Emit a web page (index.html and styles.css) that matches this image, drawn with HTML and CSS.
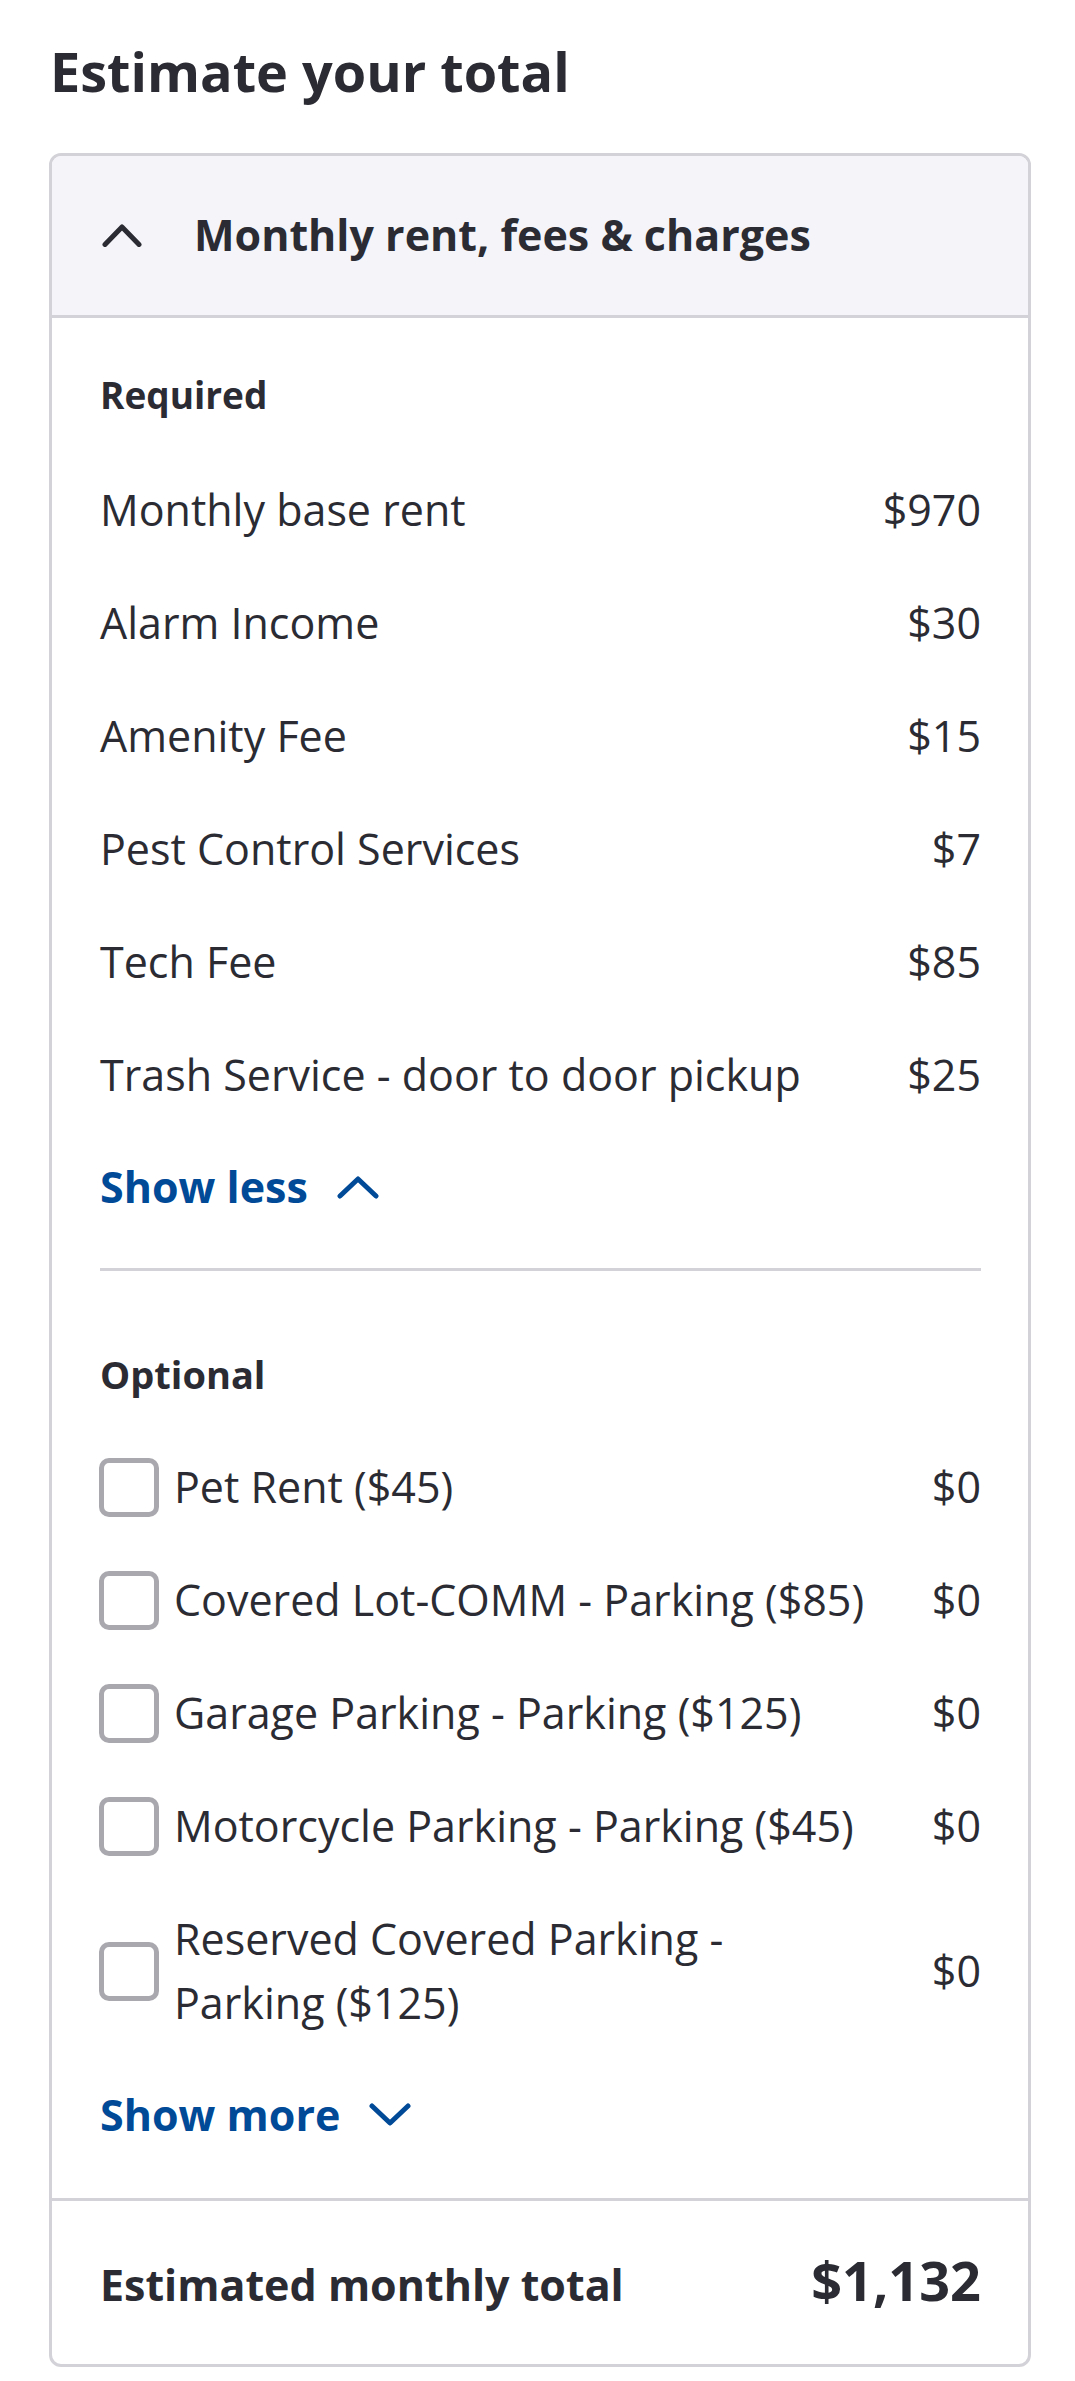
FILE: index.html
```html
<!DOCTYPE html>
<html lang="en">
<head>
<meta charset="utf-8">
<title>Estimate your total</title>
<link rel="stylesheet" href="styles.css">
</head>
<body>
<main class="page">
  <h1 class="title">Estimate your total</h1>
  <section class="card">
    <button class="card-header" type="button">
      <svg class="chev chev-header" viewBox="0 0 40 24" aria-hidden="true"><path d="M3 21.5 L20 4 L37 21.5"/></svg>
      <span class="card-title">Monthly rent, fees &amp; charges</span>
    </button>
    <div class="card-body">
      <h2 class="group-label">Required</h2>
      <ul class="fee-list">
        <li class="fee-row"><span class="fee-name">Monthly base rent</span><span class="amount">$970</span></li>
        <li class="fee-row"><span class="fee-name">Alarm Income</span><span class="amount">$30</span></li>
        <li class="fee-row"><span class="fee-name">Amenity Fee</span><span class="amount">$15</span></li>
        <li class="fee-row"><span class="fee-name">Pest Control Services</span><span class="amount">$7</span></li>
        <li class="fee-row"><span class="fee-name">Tech Fee</span><span class="amount">$85</span></li>
        <li class="fee-row"><span class="fee-name">Trash Service - door to door pickup</span><span class="amount">$25</span></li>
      </ul>
      <button class="toggle toggle-less" type="button">Show less
        <svg class="chev chev-toggle" viewBox="0 0 42 24" aria-hidden="true"><path d="M3 21 L21 4 L39 21"/></svg>
      </button>
      <hr class="divider">
      <h2 class="group-label group-optional">Optional</h2>
      <ul class="fee-list">
        <li class="fee-row"><label class="option"><span class="checkbox"></span><span class="fee-name">Pet Rent ($45)</span></label><span class="amount">$0</span></li>
        <li class="fee-row"><label class="option"><span class="checkbox"></span><span class="fee-name">Covered Lot-COMM - Parking ($85)</span></label><span class="amount">$0</span></li>
        <li class="fee-row"><label class="option"><span class="checkbox"></span><span class="fee-name">Garage Parking - Parking ($125)</span></label><span class="amount">$0</span></li>
        <li class="fee-row"><label class="option"><span class="checkbox"></span><span class="fee-name">Motorcycle Parking - Parking ($45)</span></label><span class="amount">$0</span></li>
        <li class="fee-row"><label class="option"><span class="checkbox"></span><span class="fee-name">Reserved Covered Parking - Parking ($125)</span></label><span class="amount">$0</span></li>
      </ul>
      <button class="toggle toggle-more" type="button">Show more
        <svg class="chev chev-toggle" viewBox="0 0 42 24" aria-hidden="true"><path d="M3 3 L21 20 L39 3"/></svg>
      </button>
    </div>
    <div class="card-footer">
      <span class="footer-label">Estimated monthly total</span>
      <span class="total">$1,132</span>
    </div>
  </section>
</main>
</body>
</html>
```
FILE: styles.css
```css
* {
  box-sizing: border-box;
}

body {
  margin: 0;
  background: #ffffff;
  color: #2b2c33;
  font-family: "Open Sans", "Noto Sans", sans-serif;
}

.page {
  padding: 34px 44px 0 49px;
}

.title {
  margin: 0 0 44px 1px;
  font-size: 54px;
  line-height: 75px;
  font-weight: 700;
}

.card {
  border: 3px solid #d2d2d8;
  border-radius: 12px;
  overflow: hidden;
}

.card-header {
  display: flex;
  align-items: center;
  gap: 52px;
  width: 100%;
  margin: 0;
  padding: 47px 47px 48px 50px;
  background: #f4f4f9;
  border: 0;
  border-bottom: 3px solid #d2d2d8;
  color: #2b2c33;
  font-family: inherit;
  text-align: left;
}

.card-title {
  font-size: 43px;
  line-height: 64px;
  font-weight: 700;
}

.chev {
  flex: none;
  fill: none;
  stroke-width: 5;
  stroke-linecap: round;
  stroke-linejoin: round;
}

.chev-header {
  width: 40px;
  height: 24px;
  stroke: #2b2c33;
}

.chev-toggle {
  width: 42px;
  height: 24px;
  stroke: #004a98;
}

.card-body {
  padding: 52px 47px 51px 48px;
}

.group-label {
  margin: 0 0 34px;
  font-size: 37px;
  line-height: 50px;
  font-weight: 700;
}

.group-optional {
  font-size: 38px;
  margin-bottom: 32px;
}

.fee-list {
  list-style: none;
  margin: 0;
  padding: 0;
}

.fee-row {
  display: flex;
  align-items: center;
  justify-content: space-between;
  padding: 24px 0 25px;
  font-size: 43px;
  line-height: 64px;
}

.amount {
  flex: none;
  padding-left: 50px;
  text-align: right;
}

.option {
  display: flex;
  align-items: center;
  flex: 1;
  min-width: 0;
}

.checkbox {
  flex: none;
  width: 60px;
  height: 59px;
  margin: 0 15px 0 -1px;
  border: 5px solid #a8a8ae;
  border-radius: 10px;
  background: #ffffff;
}

.toggle {
  display: inline-flex;
  align-items: center;
  margin: 23px 0 0;
  padding: 0;
  background: none;
  border: 0;
  color: #004a98;
  font-family: inherit;
  font-size: 43px;
  line-height: 64px;
  font-weight: 700;
}

.toggle-less {
  gap: 29px;
}

.toggle-more {
  gap: 29px;
}

.divider {
  margin: 49px 0 78px;
  height: 3px;
  border: 0;
  background: #d2d2d8;
}

.card-footer {
  display: flex;
  align-items: baseline;
  justify-content: space-between;
  padding: 43px 47px 43px 48px;
  border-top: 3px solid #d2d2d8;
}

.footer-label {
  font-size: 43px;
  line-height: 72px;
  font-weight: 700;
}

.total {
  font-size: 54px;
  line-height: 72px;
  font-weight: 700;
}
```
